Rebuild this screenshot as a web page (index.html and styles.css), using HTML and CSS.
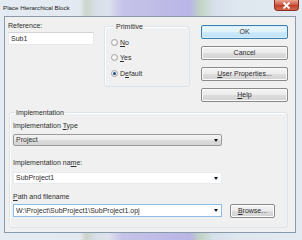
FILE: index.html
```html
<!DOCTYPE html>
<html lang="en">
<head>
    <meta charset="UTF-8">
    <title>Place Hierarchical Block</title>
    <link rel="stylesheet" href="styles.css">
</head>
<body>
    <div class="window">
        <div class="titlebar">
            <span class="title">Place Hierarchical Block</span>
            <span class="close">
                <svg width="9" height="7" viewBox="0 0 9 7"><path d="M1.5 0.5 L7.5 6.5 M7.5 0.5 L1.5 6.5" stroke="#fff" stroke-width="1.8"/></svg>
            </span>
        </div>

        <div class="client">
            <div class="top">
                <div class="ref">
                    <div class="lbl">Reference:</div>
                    <div class="textbox">Sub1</div>
                </div>

                <div class="group primitive">
                    <span class="legend">Primitive</span>
                    <div class="radio"><span class="circle"></span><span><u>N</u>o</span></div>
                    <div class="radio"><span class="circle"></span><span><u>Y</u>es</span></div>
                    <div class="radio"><span class="circle checked"></span><span>D<u>e</u>fault</span></div>
                </div>

                <div class="buttons">
                    <div class="btn default">OK</div>
                    <div class="btn">Cancel</div>
                    <div class="btn"><u>U</u>ser Properties...</div>
                    <div class="btn"><u>H</u>elp</div>
                </div>
            </div>

            <div class="group impl">
                <span class="legend">Implementation</span>
                <div class="lbl first">Implementation <u>T</u>ype</div>
                <div class="combo droplist">Project<span class="arrow"></span></div>

                <div class="lbl second">Implementation na<u>m</u>e:</div>
                <div class="combo edit name">SubProject1<span class="arrow"></span></div>

                <div class="lbl third"><u>P</u>ath and filename</div>
                <div class="path-row">
                    <div class="combo edit focus">W:\Project\SubProject1\SubProject1.opj<span class="arrow"></span></div>
                    <div class="btn browse"><u>B</u>rowse...</div>
                </div>
            </div>
        </div>
    </div>
</body>
</html>
```

FILE: styles.css
```css
* {
    box-sizing: border-box;
}
body {
    margin: 0;
    font-family: "Liberation Sans", Arial, sans-serif;
    font-size: 7px;
    color: #2e2e2e;
    background: #dbe4ed;
}
u {
    text-decoration: underline;
    text-underline-offset: 1px;
}
.window {
    width: 302px;
    height: 240px;
    display: flex;
    flex-direction: column;
    background: linear-gradient(90deg, #e4ebf2 0, #e2e9f0 80px, #ccd4cc 86px, #d8dfe7 96px, #dde3ed 108px, #c6c3e8 122px, #b9b5e6 190px, #c2d4c4 200px, #d6e0ea 214px, #dfe7ef 240px, #e3eaf1 100%);
}
.titlebar {
    height: 16px;
    display: flex;
    justify-content: space-between;
    align-items: flex-start;
    padding-left: 3px;
}
.title {
    font-size: 6.2px;
    line-height: 9px;
    margin-top: 3px;
    color: #1a1a1a;
}
.close {
    width: 25px;
    height: 11px;
    margin-right: 3px;
    display: flex;
    align-items: center;
    justify-content: center;
    border: 1px solid #8c2f22;
    border-top: none;
    border-radius: 0 0 4px 4px;
    background: linear-gradient(#e9a593, #d0604a 45%, #c0402b 55%, #d06a50);
}
.client {
    margin: 0 6px 7px 4px;
    flex: 1;
    border: 1px solid #8a9aa9;
    background: #f0f0f0;
}
.top {
    height: 95px;
    display: flex;
    align-items: flex-start;
}
.lbl {
    line-height: 9px;
    height: 9px;
    white-space: nowrap;
}
.ref {
    width: 86px;
    margin-left: 3px;
    margin-top: 4px;
}
.textbox {
    margin-top: 2px;
    height: 13px;
    line-height: 11px;
    padding-left: 2px;
    background: #fff;
    border: 1px solid #e6eaee;
    border-top-color: #d0d4d8;
}
.group {
    border: 1px solid #dde4ea;
    border-radius: 3px;
    box-shadow: inset 1px 1px 0 #fff;
}
.legend {
    display: block;
    width: fit-content;
    line-height: 9px;
    margin: -5px 0 0 3px;
    padding: 0 2px;
    background: #f0f0f0;
}
.primitive {
    width: 86px;
    height: 61px;
    margin: 9px 0 0 10px;
    padding-left: 6px;
}
.radio {
    height: 12px;
    display: flex;
    align-items: center;
    gap: 2px;
    margin-top: 3.5px;
}
.radio:first-of-type {
    margin-top: 5px;
}
.circle {
    width: 7px;
    height: 7px;
    border-radius: 50%;
    border: 1px solid #a4a4a4;
    background: radial-gradient(circle at 40% 40%, #fff, #dcdcdc);
    display: flex;
    align-items: center;
    justify-content: center;
}
.circle.checked::after {
    content: "";
    width: 3px;
    height: 3px;
    border-radius: 50%;
    background: #1b4f8c;
}
.buttons {
    width: 87px;
    margin: 8px 0 0 11px;
    display: flex;
    flex-direction: column;
    gap: 7px;
}
.btn {
    height: 14px;
    line-height: 12px;
    text-align: center;
    border: 1px solid #8a8a8a;
    border-radius: 2px;
    background: linear-gradient(#f4f4f4, #ebebeb 50%, #dddddd 51%, #d2d2d2);
    box-shadow: inset 0 0 0 1px #fbfbfb;
    white-space: nowrap;
}
.btn.default {
    border-color: #3c7fb1;
    background: linear-gradient(#eaf6fd, #dff2fc 50%, #cdeafb 51%, #bde0f5);
    box-shadow: inset 0 0 0 1px #d6eefa;
}
.impl {
    width: 279px;
    height: 116px;
    margin-left: 4px;
    padding-left: 3px;
}
.impl .legend {
    margin-left: 2px;
    padding: 0 1px;
}
.lbl.first {
    margin-top: 3.5px;
}
.lbl.second {
    margin-top: 11.5px;
}
.lbl.third {
    margin-top: 7.5px;
}
.combo {
    width: 209px;
    height: 12px;
    line-height: 10px;
    padding-left: 2px;
    display: flex;
    justify-content: space-between;
    align-items: center;
    white-space: nowrap;
}
.droplist {
    margin-top: 4.5px;
    border: 1px solid #999a9a;
    border-radius: 2px;
    background: linear-gradient(#f3f3f3, #ebebeb 50%, #dddddd 51%, #d4d4d4);
}
.edit {
    background: #fff;
    border: 1px solid #e6ebf0;
}
.name {
    margin-top: 5.5px;
}
.focus {
    height: 13px;
    border-color: #8cbde8;
}
.arrow {
    width: 0;
    height: 0;
    margin-right: 3px;
    border-left: 2.5px solid transparent;
    border-right: 2.5px solid transparent;
    border-top: 3px solid #111;
}
.path-row {
    margin-top: 3px;
    display: flex;
    align-items: center;
    gap: 8px;
}
.btn.browse {
    width: 45px;
}
```
